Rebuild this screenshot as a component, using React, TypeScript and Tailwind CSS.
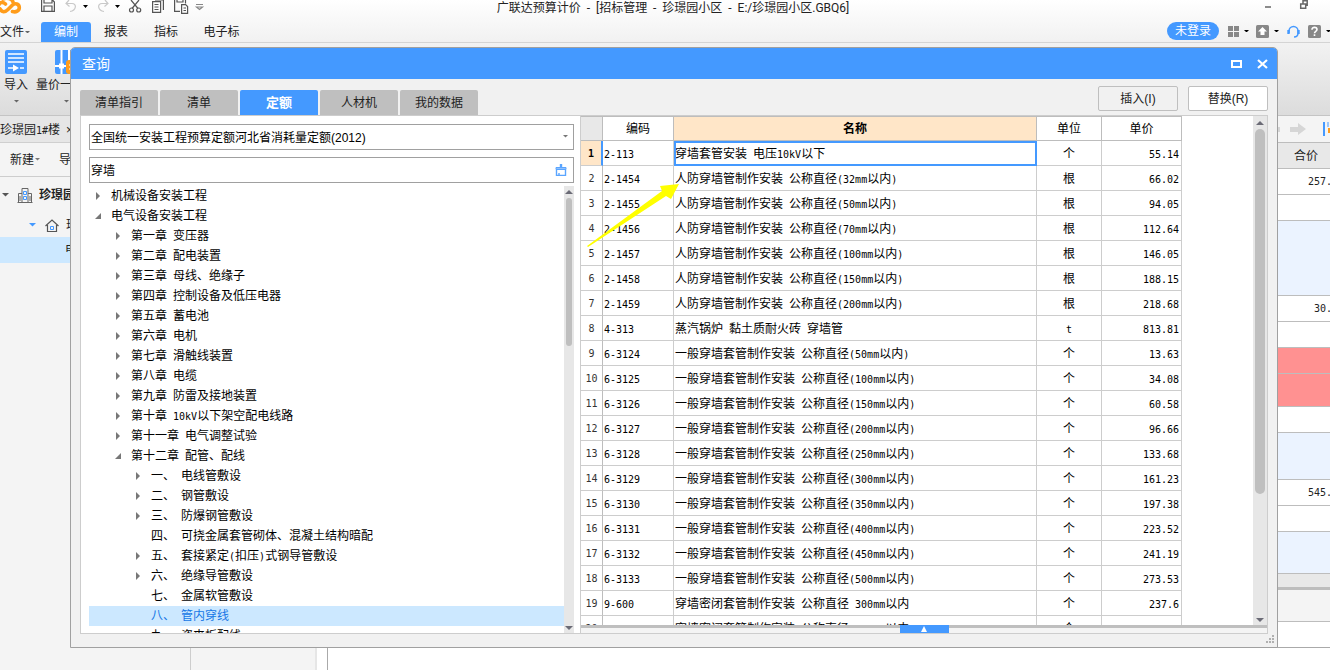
import clsx from "clsx";
import type { ReactNode } from "react";

type Item = { level: number; label: string; state: "open" | "closed" | "leaf" };

const tree: Item[] = [
  { level: 0, label: "机械设备安装工程", state: "closed" },
  { level: 0, label: "电气设备安装工程", state: "open" },
  { level: 1, label: "第一章 变压器", state: "closed" },
  { level: 1, label: "第二章 配电装置", state: "closed" },
  { level: 1, label: "第三章 母线、绝缘子", state: "closed" },
  { level: 1, label: "第四章 控制设备及低压电器", state: "closed" },
  { level: 1, label: "第五章 蓄电池", state: "closed" },
  { level: 1, label: "第六章 电机", state: "closed" },
  { level: 1, label: "第七章 滑触线装置", state: "closed" },
  { level: 1, label: "第八章 电缆", state: "closed" },
  { level: 1, label: "第九章 防雷及接地装置", state: "closed" },
  { level: 1, label: "第十章 10kV以下架空配电线路", state: "closed" },
  { level: 1, label: "第十一章 电气调整试验", state: "closed" },
  { level: 1, label: "第十二章 配管、配线", state: "open" },
  { level: 2, label: "一、 电线管敷设", state: "closed" },
  { level: 2, label: "二、 钢管敷设", state: "closed" },
  { level: 2, label: "三、 防爆钢管敷设", state: "closed" },
  { level: 2, label: "四、 可挠金属套管砌体、混凝土结构暗配", state: "leaf" },
  { level: 2, label: "五、 套接紧定(扣压)式钢导管敷设", state: "closed" },
  { level: 2, label: "六、 绝缘导管敷设", state: "closed" },
  { level: 2, label: "七、 金属软管敷设", state: "leaf" },
  { level: 2, label: "八、 管内穿线", state: "leaf" },
  { level: 2, label: "九、 瓷夹板配线", state: "leaf" },
];

const rows = [
  ["2-113", "穿墙套管安装 电压10kV以下", "个", "55.14"],
  ["2-1454", "人防穿墙管制作安装 公称直径(32mm以内)", "根", "66.02"],
  ["2-1455", "人防穿墙管制作安装 公称直径(50mm以内)", "根", "94.05"],
  ["2-1456", "人防穿墙管制作安装 公称直径(70mm以内)", "根", "112.64"],
  ["2-1457", "人防穿墙管制作安装 公称直径(100mm以内)", "根", "146.05"],
  ["2-1458", "人防穿墙管制作安装 公称直径(150mm以内)", "根", "188.15"],
  ["2-1459", "人防穿墙管制作安装 公称直径(200mm以内)", "根", "218.68"],
  ["4-313", "蒸汽锅炉 黏土质耐火砖 穿墙管", "t", "813.81"],
  ["6-3124", "一般穿墙套管制作安装 公称直径(50mm以内)", "个", "13.63"],
  ["6-3125", "一般穿墙套管制作安装 公称直径(100mm以内)", "个", "34.08"],
  ["6-3126", "一般穿墙套管制作安装 公称直径(150mm以内)", "个", "60.58"],
  ["6-3127", "一般穿墙套管制作安装 公称直径(200mm以内)", "个", "96.66"],
  ["6-3128", "一般穿墙套管制作安装 公称直径(250mm以内)", "个", "133.68"],
  ["6-3129", "一般穿墙套管制作安装 公称直径(300mm以内)", "个", "161.23"],
  ["6-3130", "一般穿墙套管制作安装 公称直径(350mm以内)", "个", "197.38"],
  ["6-3131", "一般穿墙套管制作安装 公称直径(400mm以内)", "个", "223.52"],
  ["6-3132", "一般穿墙套管制作安装 公称直径(450mm以内)", "个", "241.19"],
  ["6-3133", "一般穿墙套管制作安装 公称直径(500mm以内)", "个", "273.53"],
  ["9-600", "穿墙密闭套管制作安装 公称直径 300mm以内", "个", "237.6"],
  ["9-601", "穿墙密闭套管制作安装 公称直径 400mm以内", "个", "268.4"],
];

// Half-width runs are set in a 6px monospace so they line up with the 12px ideographs.
function Mixed({ text }: { text: string }) {
  return (
    <>
      {text.split(/([\x20-\x7e]+)/).map((run, i) =>
        i % 2 ? (
          <span key={i} className="font-['DejaVu_Sans_Mono',monospace] text-[10px] whitespace-pre">
            {run}
          </span>
        ) : (
          run
        ),
      )}
    </>
  );
}

function Caret({ className = "w-[5px] text-black" }: { className?: string }) {
  return (
    <svg viewBox="0 0 6 3" className={clsx("shrink-0", className)} fill="currentColor">
      <path d="M0 0h6L3 3z" />
    </svg>
  );
}

function Scrollbar({ thumb, className }: { thumb: string; className?: string }) {
  return (
    <div className={clsx("flex shrink-0 flex-col items-center bg-[#e7e7e7]", className)}>
      <svg viewBox="0 0 8 4" className="my-[4px] h-[4px] w-[8px] shrink-0" fill="#6b6b76">
        <path d="M0 4L4 0l4 4z" />
      </svg>
      <div className="flex min-h-0 w-full flex-1 justify-center">
        <div className={clsx("rounded-full bg-[#bfbfbf]", thumb)} />
      </div>
      <svg viewBox="0 0 8 4" className="my-[3px] h-[4px] w-[8px] shrink-0" fill="#6b6b76">
        <path d="M0 0h8L4 4z" />
      </svg>
    </div>
  );
}

function QuickIcons() {
  return (
    <svg viewBox="0 0 205 16" className="h-[16px] w-[205px] shrink-0" fill="none" stroke="#555" strokeWidth="1.2">
      <g stroke="#ff9c1a" strokeWidth="3.6" strokeLinecap="round">
        <path d="M0 9C2 12.500 5 12.500 8 9.500L12.500 5C15 2.500 19.300 4 19.300 7.500C19.300 11 16 12.500 12.500 11.500" />
        <path d="M-1 4.500C0 2 3.500 2 5.500 4M3 -1C7 -2.500 12 -1.500 13 2" />
      </g>
      <path d="M41.600 0v11.400h12.800V2L52.500 0M44 0v3h8V0M44 11V6h8v5" />
      <g stroke="#c9c9c9">
        <path d="M69 0l-3 3.500 3.500 3M66 3.500h6c5 0 4.500 7-2 8" />
        <path d="M105 0l3 3.500-3.500 3M108 3.500h-6c-5 0-4.500 7 2 8" />
      </g>
      <path d="M83 5h5l-2.500 3zM115 5h5l-2.500 3z" fill="#000" stroke="none" />
      <path d="M131 0l7 8.500M139 0l-7 8.500" />
      <circle cx="131.500" cy="10" r="2" />
      <circle cx="138.700" cy="10" r="2" />
      <path d="M155 0h8.400v10M152.600 1.600h8v10.800h-8zM154.500 4.500h4M154.500 7h4M154.500 9.500h4" />
      <path d="M180 11.400h-5.400V0M177 0v2h6V0M185.500 0v3.500M181.600 4.600h4l2 2v6.800h-6zM183.500 8h2.500M183.500 10.500h2.500" />
      <path d="M196 4.500h7M196.500 7h6l-3 2.500z" stroke="#888" />
    </svg>
  );
}

function RibbonButton({ label, children, className }: { label: string; children: ReactNode; className?: string }) {
  return (
    <button className={clsx("flex shrink-0 flex-col items-center", className)}>
      {children}
      <span className="mt-[4px] leading-[14px] whitespace-nowrap">{label}</span>
      <Caret className="mt-[8px] w-[5px] text-[#666]" />
    </button>
  );
}

function TopBar() {
  return (
    <header className="flex h-[43px] flex-col justify-between border-b border-[#d4d4d4] bg-linear-to-b from-white to-[#f1f1f1]">
      <div className="flex h-[16px] items-start">
        <QuickIcons />
        <h1 className="flex-1 text-center font-['Roboto','Noto_Sans_CJK_SC',sans-serif] leading-[16px]">
          广联达预算计价&nbsp; -&nbsp; [招标管理&nbsp; -&nbsp; 珍璟园小区&nbsp; -&nbsp; E:/珍璟园小区.GBQ6]
        </h1>
        <div className="flex w-[189px] justify-end pr-[22px]">
          <svg viewBox="0 0 43 10" className="h-[10px] w-[43px]" fill="none" stroke="#666" strokeWidth="1.500">
            <path d="M0 7h6M35.700 4h5v4.300h-5zM38 3.500V.8h4.200v4.500h-1.500" />
          </svg>
        </div>
      </div>
      <div className="flex h-[21px] items-end justify-between">
        <nav className="flex h-[20px] items-center">
          <button className="flex w-[41px] items-center">
            <span className="whitespace-nowrap">文件</span>
            <Caret className="ml-px w-[5px] text-[#666]" />
          </button>
          <button className="h-[20px] w-[50px] rounded-t-[3px] bg-[#4499ff] text-white">编制</button>
          <button className="w-[50px]">报表</button>
          <button className="w-[50px]">指标</button>
          <button className="w-[61px]">电子标</button>
        </nav>
        <div className="mb-[2px] flex items-center gap-[5px]">
          <button className="mr-[4px] h-[18px] w-[52px] rounded-full bg-[#4499ff] leading-[18px] text-white">未登录</button>
          <svg viewBox="0 0 11 11" className="size-[11px]" fill="#888">
            <path d="M0 0h5v5H0zM6 0h5v5H6zM0 6h5v5H0zM6 6h5v5H6z" />
          </svg>
          <Caret />
          <svg viewBox="0 0 13 13" className="ml-[2px] size-[13px]">
            <rect width="13" height="13" rx="1.500" fill="#888" />
            <path d="M6.500 2L11 6.500H8.500V10h-4V6.500H2z" fill="#fff" />
          </svg>
          <Caret />
          <svg viewBox="0 0 13 13" className="ml-[3px] size-[13px]" fill="none" stroke="#4499ff">
            <path d="M2 8V6a4.500 4.500 0 0 1 9 0v2c0 3-2 4-4 4" strokeWidth="1.500" />
            <path d="M1.500 5v4M11.500 5v4" strokeWidth="2.400" />
          </svg>
          <svg viewBox="0 0 13 13" className="ml-[3px] size-[13px]" fill="none">
            <rect width="13" height="13" rx="1.500" fill="#888" />
            <path d="M4 4.800C4 1.500 9 1.800 9 4.600 9 6.500 6.500 6.300 6.500 8.300M6.500 9.300v1.700" stroke="#fff" strokeWidth="1.600" />
          </svg>
          <Caret className="-mr-px w-[5px] text-black" />
        </div>
      </div>
    </header>
  );
}

function Ribbon() {
  return (
    <div className="flex h-[73px] border-b border-[#c4c4c4] bg-linear-to-b from-[#f2f2f2] to-[#dcdcdc] pt-[7px]">
      <RibbonButton label="导入" className="w-[32px]">
        <svg viewBox="0 0 22 24" className="h-[24px] w-[22px]">
          <rect width="22" height="24" rx="2" fill="#4499ff" />
          <path d="M3 4h16M3 8h16M3 12h16M3 18h6M15 18h4" stroke="#fff" strokeWidth="1.600" />
          <path d="M8 14.500l6 3.500-6 3.500z" fill="#fff" />
        </svg>
      </RibbonButton>
      <RibbonButton label="量价一体化" className="w-[68px]">
        <svg viewBox="0 0 22 24" className="h-[24px] w-[22px]">
          <rect width="22" height="24" rx="2" fill="#4499ff" />
          <path d="M6.500 0v24M14 0v12M0 16h11" stroke="#fff" strokeWidth="2" />
          <path d="M4 13.500h5v5H4z" fill="#fff" />
          <rect x="11" y="10" width="11" height="14" rx="3" fill="#ff9c1a" />
          <path d="M14 15h6M14 19h6" stroke="#fff" />
        </svg>
      </RibbonButton>
    </div>
  );
}

function Sidebar() {
  return (
    <aside className="w-[191px] shrink-0 border-r border-[#cdcdcd] bg-[#f4f4f4]">
      <div className="flex h-[27px] items-center gap-[6px] border-b border-[#cfcfcf] bg-[#e6e6e6] pt-[2px] whitespace-nowrap">
        <span>
          <Mixed text="珍璟园1#楼" />
        </span>
        <span>×</span>
      </div>
      <div className="flex h-[34px] items-center border-b border-[#cdcdcd] pl-[10px]">
        <button>新建</button>
        <Caret className="ml-px w-[5px] text-[#777]" />
        <button className="ml-[19px]">导入导出</button>
      </div>
      <div className="flex h-[36px] items-center pl-[2px] font-bold">
        <Caret className="w-[7px] text-[#555]" />
        <svg viewBox="0 0 16 16" className="mr-[6px] ml-[8px] size-[16px]" fill="none" stroke="#666">
          <path d="M.5 15.500h15M1.500 15V6.500H5M14.500 15V6.500H11M5 15V1.500h6V15" />
          <path d="M6.500 4.500h3v3h-3zM6.500 9.500h3v3h-3z" stroke="#4499ff" />
          <path d="M3 9v5M13 9v5" />
        </svg>
        <span>珍璟园小区</span>
      </div>
      <div className="flex h-[24px] items-center pl-[29px]">
        <Caret className="w-[7px] text-[#4499ff]" />
        <svg viewBox="0 0 14 13" className="mr-[7px] ml-[9px] h-[13px] w-[14px]" fill="none" stroke="#555">
          <path d="M.5 7L7 1l6.500 6M2.500 6v6.500h9V6" strokeWidth="1.200" />
          <path d="M5.500 7.500h3v3h-3z" stroke="#4499ff" />
        </svg>
        珍璟园
      </div>
      <div className="h-[26px] bg-[#cce8ff] pl-[65px] leading-[26px]">电气</div>
    </aside>
  );
}

const budgetRows = [
  { h: "h-[26px]", bg: "bg-white", total: "257.35" },
  { h: "h-[26px]", bg: "bg-white" },
  { h: "h-[75px]", bg: "bg-[#ebf3ff]" },
  { h: "h-[26px]", bg: "bg-white", total: "30.96" },
  { h: "h-[26px]", bg: "bg-white" },
  { h: "h-[26px]", bg: "bg-[#ff9191]" },
  { h: "h-[33px]", bg: "bg-[#ff9191]" },
  { h: "h-[26px]", bg: "bg-white" },
  { h: "h-[47px]", bg: "bg-[#ebf3ff]" },
  { h: "h-[26px]", bg: "bg-white", total: "545.12" },
  { h: "h-[26px]", bg: "bg-white" },
  { h: "h-[42px]", bg: "bg-[#ebf3ff]" },
];

function Workspace() {
  return (
    <main className="flex min-w-0 flex-1">
      <div className="w-[126px] shrink-0 border-r-2 border-[#e6e6e6] bg-[#f4f4f4]" />
      <div className="flex min-w-0 flex-1 flex-col overflow-hidden bg-white">
        <div className="flex h-[27px] shrink-0 items-center justify-end border-b border-[#bdbdbd] bg-[#f4f4f4]">
          <svg viewBox="0 0 52 20" className="h-[20px] w-[52px]">
            <path d="M0 8h2v5H0zM12 8h8V4l8 6-8 6v-3h-8z" fill="#d6d6d6" />
            <path d="M46 3v14" stroke="#4499ff" strokeWidth="2" />
            <path d="M50 3v5" stroke="#4499ff" strokeWidth="1" />
            <path d="M50 9h2v5h-2z" fill="#ff9c1a" />
          </svg>
        </div>
        <table className="w-full shrink-0 border-separate border-spacing-0">
          <thead>
            <tr>
              <th className="h-[26px] border-b border-[#bdbdbd] bg-[#e8e8e8] p-0 pr-[12px] text-right font-normal">合价</th>
            </tr>
          </thead>
          <tbody>
            {budgetRows.map((row, i) => (
              <tr key={i}>
                <td className={clsx("border-b border-[#bdbdbd] p-0 text-right leading-[16px]", row.h, row.bg)}>
                  {row.total && (
                    <span className="-mr-[14px]">
                      <Mixed text={row.total} />
                    </span>
                  )}
                </td>
              </tr>
            ))}
          </tbody>
        </table>
        <div className="h-[13px] shrink-0 bg-[#e8e8e8]" />
        <div className="h-[35px] shrink-0 border-t-3 border-b border-[#bdbdbd] bg-[#f4f4f4]" />
        <div className="h-[25px] shrink-0" />
        <div className="ml-[10px] flex-1 border-t border-l border-[#aaa]" />
      </div>
    </main>
  );
}

function TreeMark({ state }: { state: Item["state"] }) {
  return (
    <svg viewBox="0 0 8 8" className="mr-[9px] size-[8px] shrink-0" fill="#777">
      {state === "closed" && <path d="M2 0l4 4-4 4z" />}
      {state === "open" && <path d="M7 1v6H1z" />}
    </svg>
  );
}

const indent = ["pl-[5px]", "pl-[25px]", "pl-[45px]"];

function QuotaTree() {
  return (
    <div className="mt-[3px] flex min-h-0 flex-1">
      <ul className="min-w-0 flex-1 overflow-hidden">
        {tree.map((item) => (
          <li
            key={item.label}
            className={clsx(
              "flex h-[20px] items-center leading-[20px] whitespace-nowrap",
              indent[item.level],
              item.label.startsWith("八") && "bg-[#cce8ff] text-[#1677e6]",
            )}
          >
            <TreeMark state={item.state} />
            <span>
              <Mixed text={item.label} />
            </span>
          </li>
        ))}
      </ul>
      <Scrollbar className="w-[10px]" thumb="h-[148px] w-[6px]" />
    </div>
  );
}

function QuotaTable() {
  const cell = "h-[25px] border-r border-b border-[#cdcdcd] p-0 leading-[20px] whitespace-nowrap";
  const head = "h-[25px] border-t border-r border-b border-[#bdbdbd] p-0 leading-[20px]";
  return (
    <table className="w-[601px] table-fixed border-separate border-spacing-0 text-black">
      <colgroup>
        <col className="w-[22px]" />
        <col className="w-[71px]" />
        <col className="w-[363px]" />
        <col className="w-[65px]" />
        <col className="w-[80px]" />
      </colgroup>
      <thead>
        <tr>
          <th className={clsx(head, "bg-[#e8e8e8]")} aria-label="序号" />
          <th className={clsx(head, "font-normal")}>编码</th>
          <th className={clsx(head, "bg-[#ffe6c8] font-bold")}>名称</th>
          <th className={clsx(head, "font-normal")}>单位</th>
          <th className={clsx(head, "font-normal")}>单价</th>
        </tr>
      </thead>
      <tbody>
        {rows.map(([code, name, unit, price], i) => (
          <tr key={code}>
            <th
              scope="row"
              className={clsx(
                cell,
                i === 0
                  ? "border-r-2 border-r-[#4499ff] bg-[#ffe6c8] font-bold"
                  : "border-r-[#bdbdbd] font-normal text-[#333]",
              )}
            >
              <Mixed text={String(i + 1)} />
            </th>
            <td className={clsx(cell, "pt-[2px] pl-px")}>
              <Mixed text={code} />
            </td>
            <td className={clsx(cell, "pt-[2px] pl-px", i === 0 && "outline-2 -outline-offset-2 outline-[#4499ff]")}>
              <Mixed text={name} />
            </td>
            <td className={clsx(cell, "pt-[2px] text-center")}>
              <Mixed text={unit} />
            </td>
            <td className={clsx(cell, "pt-[2px] pr-[2px] text-right")}>
              <Mixed text={price} />
            </td>
          </tr>
        ))}
      </tbody>
    </table>
  );
}

function QueryDialog() {
  const tabs = ["清单指引", "清单", "定额", "人材机", "我的数据"];
  return (
    <section
      role="dialog"
      aria-label="查询"
      className="absolute top-[47px] right-[52px] bottom-[22px] left-[70px] flex flex-col overflow-hidden rounded-t-[5px] border border-[#a0a0a0] bg-[#f1f1f1]"
    >
      <div className="flex h-[31px] shrink-0 items-center justify-between bg-[#4499ff] pr-[9px] pl-[11px] text-white">
        <h2 className="text-[14px]">查询</h2>
        <div className="flex gap-[15px]">
          <button aria-label="最大化">
            <svg viewBox="0 0 11 10" className="h-[10px] w-[11px]" fill="none" stroke="#fff" strokeWidth="2">
              <path d="M1 2h9v6H1z" />
            </svg>
          </button>
          <button aria-label="关闭">
            <svg viewBox="0 0 11 10" className="h-[10px] w-[11px]" stroke="#fff" strokeWidth="2.200">
              <path d="M1 1l9 8M10 1L1 9" />
            </svg>
          </button>
        </div>
      </div>

      <div className="flex h-[36px] shrink-0 items-end justify-between px-[9px]">
        <div role="tablist" className="flex gap-[2px]">
          {tabs.map((tab) => (
            <button
              key={tab}
              role="tab"
              aria-selected={tab === "定额"}
              className={clsx(
                "h-[25px] w-[78px] rounded-t-[2px]",
                tab === "定额" ? "bg-[#4499ff] text-[13px] font-bold text-white" : "bg-[#bfbfbf]",
              )}
            >
              {tab}
            </button>
          ))}
        </div>
        <div className="mb-[4px] flex gap-[10px]">
          <button className="h-[25px] w-[80px] rounded-[2px] border border-[#bfbfbf] bg-[#f1f1f1]">插入(I)</button>
          <button className="h-[25px] w-[80px] rounded-[2px] border border-[#bfbfbf] bg-white">替换(R)</button>
        </div>
      </div>

      <div className="mx-[9px] mb-[13px] flex min-h-0 flex-1 border border-[#cdcdcd] bg-white">
        <div className="flex w-[500px] shrink-0 flex-col border-r border-[#cdcdcd] pt-[8px] pr-[6px] pl-[8px] text-black">
          <div className="relative flex">
            <select
              aria-label="定额库"
              className="h-[26px] w-full appearance-none border border-[#a0a0a0] bg-white pt-[2px] pl-px"
            >
              <option>全国统一安装工程预算定额河北省消耗量定额(2012)</option>
            </select>
            <Caret className="pointer-events-none absolute top-[11px] right-[6px] w-[5px] text-[#777]" />
          </div>
          <div className="mt-[7px] flex h-[26px] shrink-0 items-center border border-[#a0a0a0] pr-[6px]">
            <input aria-label="查询条件" defaultValue="穿墙" className="min-w-0 flex-1 pt-[2px] pl-px outline-none" />
            <button aria-label="清空">
              <svg viewBox="0 0 12 12" className="size-[12px]" fill="none" stroke="#5aa5ff">
                <path d="M6 0v3" strokeWidth="2.400" />
                <path d="M1 3.500h10v2H1z" fill="#8fc1ff" />
                <path d="M1.500 6v5.500h9V6M4 11V9" strokeWidth="1.400" />
              </svg>
            </button>
          </div>
          <QuotaTree />
        </div>

        <div className="relative flex min-w-0 flex-1 flex-col">
          <div className="flex min-h-0 flex-1">
            <div className="min-w-0 flex-1 overflow-hidden">
              <QuotaTable />
            </div>
            <Scrollbar className="w-[14px] pt-px" thumb="h-[365px] w-[10px]" />
          </div>
          <div className="flex h-[8px] shrink-0 justify-center border-t-3 border-[#bfbfbf] bg-[#f4f4f4]">
            <button aria-label="展开" className="-mt-[3px] flex h-[8px] w-[49px] items-center justify-center bg-[#4499ff]">
              <svg viewBox="0 0 6 6" className="size-[6px]" fill="#fff">
                <path d="M3 0l3 6H0z" />
              </svg>
            </button>
          </div>
          <svg viewBox="0 0 92 64" className="pointer-events-none absolute top-[68px] left-[6px] h-[64px] w-[92px]" fill="#ffff00">
            <path d="M0 62L75 7 73 2 92 0 84 15 79 12 1 63z" />
          </svg>
        </div>
      </div>

      <svg viewBox="0 0 8 8" className="absolute right-[3px] bottom-[4px] size-[8px]" fill="#b0b0b0">
        <path d="M6 0h2v2H6zM3 3h2v2H3zM6 3h2v2H6zM0 6h2v2H0zM3 6h2v2H3zM6 6h2v2H6z" />
      </svg>
    </section>
  );
}

export default function App() {
  return (
    <div className="relative flex h-screen flex-col overflow-hidden bg-white font-['Liberation_Sans','Noto_Sans_CJK_SC',sans-serif] text-[12px] leading-[16px] text-[#222]">
      <TopBar />
      <Ribbon />
      <div className="flex min-h-0 flex-1">
        <Sidebar />
        <Workspace />
      </div>
      <QueryDialog />
    </div>
  );
}
